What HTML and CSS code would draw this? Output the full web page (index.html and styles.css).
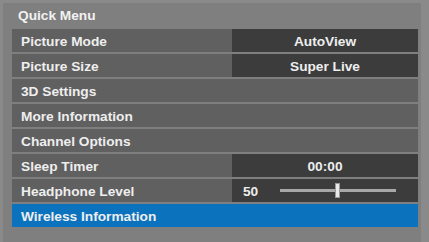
FILE: index.html
```html
<!DOCTYPE html>
<html lang="en">
<head>
    <meta charset="UTF-8">
    <title>Quick Menu</title>
    <link rel="stylesheet" href="styles.css">
</head>
<body>

    <div class="panel">
        <div class="title">Quick Menu</div>
        <div class="menu">
            <div class="row"><span class="label">Picture Mode</span><span class="value">AutoView</span></div>
            <div class="row"><span class="label">Picture Size</span><span class="value">Super Live</span></div>
            <div class="row"><span class="label">3D Settings</span></div>
            <div class="row"><span class="label">More Information</span></div>
            <div class="row"><span class="label">Channel Options</span></div>
            <div class="row"><span class="label">Sleep Timer</span><span class="value">00:00</span></div>
            <div class="row">
                <span class="label">Headphone Level</span>
                <span class="value level">
                    <span class="level-num">50</span>
                    <span class="track"><span class="thumb" style="left: 47%"></span></span>
                </span>
            </div>
            <div class="row selected"><span class="label">Wireless Information</span></div>
        </div>
    </div>

</body>
</html>
```

FILE: styles.css
```css
* { box-sizing: border-box; margin: 0; padding: 0; }
body {
    background: #8a8a8a;
    font-family: "Liberation Sans", Arial, sans-serif;
    font-weight: bold;
    font-size: 13.7px;
    color: #eeeeee;
    width: 429px;
    height: 242px;
    overflow: hidden;
}
.panel {
    margin: 3px 8px 0 3px;
    height: 239px;
    background: #7f7f7f;
    padding: 0 3px 0 9px;
}
.title {
    height: 26px;
    line-height: 26px;
    padding-left: 6px;
    color: #f2f2f2;
}
.menu {
    display: flex;
    flex-direction: column;
    gap: 2px;
}
.row {
    display: flex;
    height: 23px;
    background: #606060;
}
.label {
    flex: 1;
    padding: 2px 0 0 9px;
    line-height: 21px;
}
.value {
    width: 186px;
    background: #3c3c3c;
    text-align: center;
    padding-top: 2px;
    line-height: 21px;
}
.row.selected {
    background: #0b72bd;
}
.level {
    display: flex;
    align-items: center;
    text-align: left;
    padding: 0 0 0 11px;
}
.level-num {
    width: 37px;
    padding-top: 2px;
}
.track {
    position: relative;
    width: 116px;
    height: 3px;
    background: #a8a8a8;
}
.thumb {
    position: absolute;
    top: -6px;
    width: 5px;
    height: 15px;
    background: #e8e8e8;
    border: 1px solid #9a9a9a;
}
```
